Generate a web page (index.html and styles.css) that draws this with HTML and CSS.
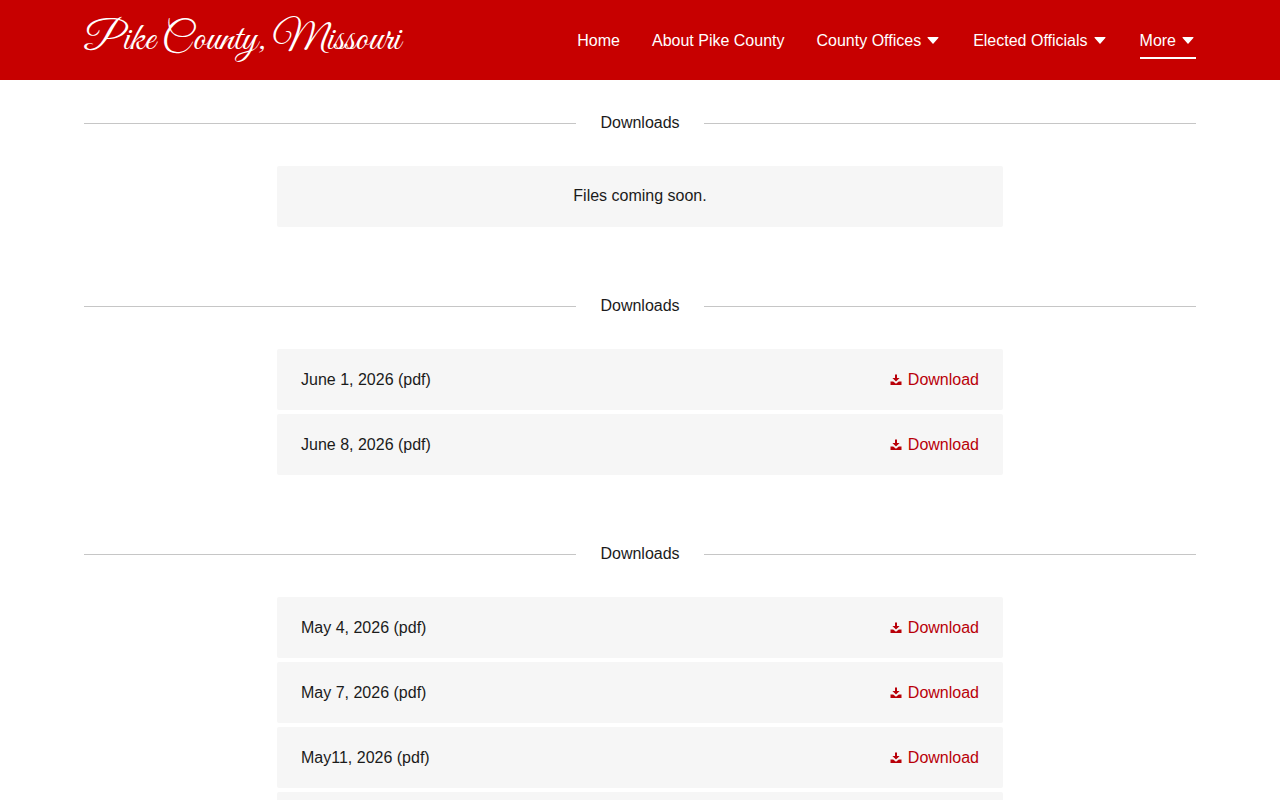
FILE: index.html
```html
<!DOCTYPE html>
<html lang="en">

<head>
    <meta charset="UTF-8">
    <meta name="viewport" content="width=device-width, initial-scale=1.0">
    <title>Pike County, Missouri</title>
    <link rel="stylesheet" href="styles.css">
</head>

<body>
    <!-- shared icons -->
    <svg class="sprite" aria-hidden="true">
        <symbol id="caret" viewBox="0 0 16 16">
            <path d="M3.2 5h9.6c.6 0 .9.6.5 1L8.5 11.5c-.3.3-.7.3-1 0L2.7 6c-.4-.4-.1-1 .5-1z" />
        </symbol>
        <symbol id="download" viewBox="0 0 12 12">
            <path d="M5 .5h2v3.4h2.6L6 7.6 2.4 3.9H5z" />
            <path d="M.5 7.6h2.7L6 9.8l2.8-2.2h2.7V11H.5z" />
        </symbol>
    </svg>

    <header class="header">
        <div class="container header-inner">
            <a class="logo" href="#">Pike County, Missouri</a>
            <nav class="nav">
                <a class="nav-link" href="#">Home</a>
                <a class="nav-link" href="#">About Pike County</a>
                <button class="nav-link" type="button">County Offices<svg class="caret"><use href="#caret" /></svg></button>
                <button class="nav-link" type="button">Elected Officials<svg class="caret"><use href="#caret" /></svg></button>
                <button class="nav-link active" type="button">More<svg class="caret"><use href="#caret" /></svg></button>
            </nav>
        </div>
    </header>

    <main class="container">
        <section class="downloads">
            <h2 class="title">Downloads</h2>
            <p class="empty">Files coming soon.</p>
        </section>

        <section class="downloads">
            <h2 class="title">Downloads</h2>
            <ul class="files">
                <li class="file">June 1, 2026 (pdf)<a class="download" href="#"><svg class="icon"><use href="#download" /></svg>Download</a></li>
                <li class="file">June 8, 2026 (pdf)<a class="download" href="#"><svg class="icon"><use href="#download" /></svg>Download</a></li>
            </ul>
        </section>

        <section class="downloads">
            <h2 class="title">Downloads</h2>
            <ul class="files">
                <li class="file">May 4, 2026 (pdf)<a class="download" href="#"><svg class="icon"><use href="#download" /></svg>Download</a></li>
                <li class="file">May 7, 2026 (pdf)<a class="download" href="#"><svg class="icon"><use href="#download" /></svg>Download</a></li>
                <li class="file">May11, 2026 (pdf)<a class="download" href="#"><svg class="icon"><use href="#download" /></svg>Download</a></li>
                <li class="file"></li>
            </ul>
        </section>
    </main>
</body>

</html>
```
FILE: styles.css
```css
* {
    box-sizing: border-box;
}

body {
    margin: 0;
    background-color: #fff;
    color: #1b1b1b;
    font: 16px/25px "Liberation Sans", Arial, sans-serif;
}

a {
    color: inherit;
    text-decoration: none;
}

.sprite {
    display: none;
}

.container {
    max-width: 1160px;
    margin: 0 auto;
    padding: 0 24px;
}

/* header */
.header {
    background-color: #c70000;
    color: #fff;
}

.header-inner {
    display: flex;
    align-items: center;
    justify-content: space-between;
    min-height: 80px;
}

.logo {
    font: 40px/48px "Great Vibes", "Liberation Serif", cursive;
    white-space: nowrap;
}

.nav {
    display: flex;
    gap: 32px;
}

.nav-link {
    display: flex;
    align-items: center;
    gap: 4px;
    margin: 0;
    padding: 6px 0 4px;
    border: 0;
    border-bottom: 2px solid transparent;
    background: none;
    color: inherit;
    font: inherit;
    white-space: nowrap;
    cursor: pointer;
}

.nav-link.active {
    border-color: #fff;
}

.caret {
    width: 16px;
    height: 16px;
    fill: currentColor;
}

/* download lists */
.downloads {
    padding: 31px 0 36px;
}

.title {
    display: flex;
    align-items: center;
    gap: 24px;
    margin: 0 0 31px;
    font-size: 16px;
    font-weight: normal;
    line-height: 24px;
}

.title::before,
.title::after {
    content: "";
    flex: 1;
    height: 1px;
    background-color: #c6c6c6;
}

.empty,
.files {
    max-width: 726px;
    margin: 0 auto;
}

.files {
    display: grid;
    gap: 4px;
    padding: 0;
    list-style: none;
}

.empty,
.file {
    min-height: 61px;
    padding: 18px 24px;
    border-radius: 2px;
    background-color: #f6f6f6;
}

.empty {
    line-height: 24px;
    text-align: center;
}

.file {
    display: flex;
    justify-content: space-between;
}

.download {
    display: flex;
    align-items: center;
    gap: 6px;
    color: #b90009;
}

.icon {
    width: 12px;
    height: 12px;
    fill: currentColor;
}
```
